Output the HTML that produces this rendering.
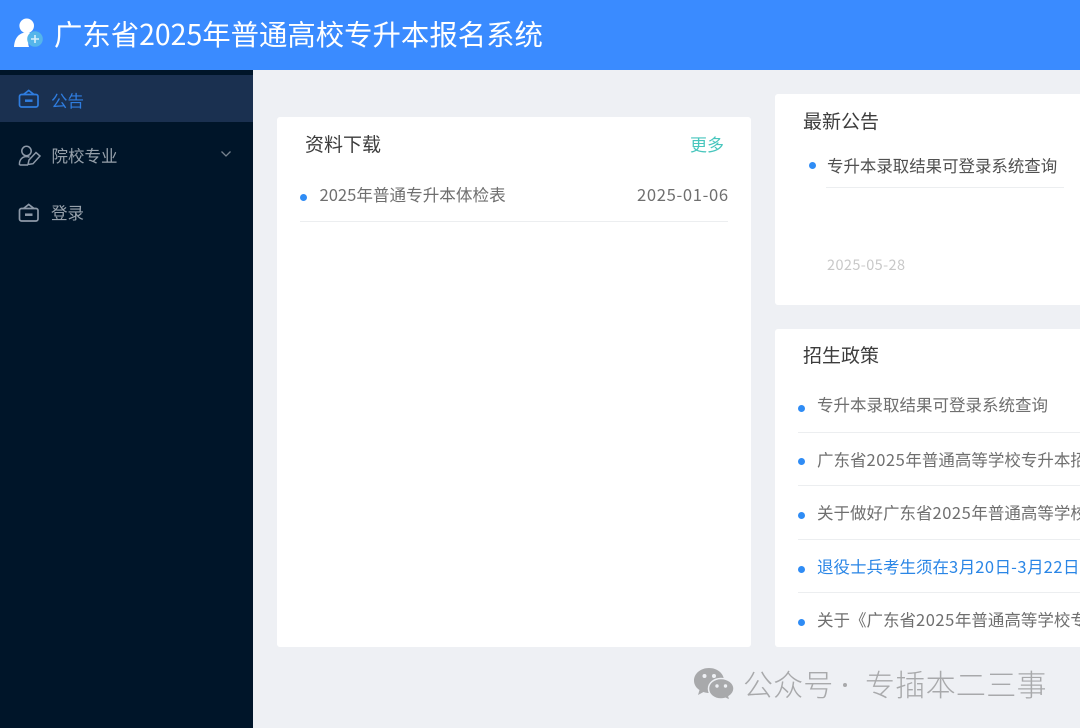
<!DOCTYPE html>
<html lang="zh"><head><meta charset="utf-8"><title>广东省2025年普通高校专升本报名系统</title>
<style>
html,body{margin:0;padding:0}
body{width:1080px;height:728px;position:relative;overflow:hidden;background:#eef0f4;font-family:"Noto Sans CJK SC","Liberation Sans",sans-serif}
#w{position:absolute;left:0;top:0;width:1080px;height:728px;overflow:hidden;filter:blur(.3px)}
.a{position:absolute;white-space:nowrap;line-height:1}
.box{position:absolute;background:#fff;border-radius:3px}
.line{position:absolute;height:1px;background:#eceef0}
.dot{position:absolute;width:7px;height:7px;border-radius:50%;background:#2f8cf5}
.h{font-size:19px;color:#3c3c3c}
.t{font-size:16.5px;color:#6f6f6f}
.n{letter-spacing:.55px}
svg{position:absolute}
</style></head><body><div id="w">
<div style="position:absolute;left:0;top:0;width:1080px;height:70px;background:#3a8bff"></div>
<svg style="left:12px;top:16px" width="34" height="34" viewBox="0 0 34 34">
<circle cx="14.700" cy="9.800" r="7.300" fill="#fff"/>
<path d="M2 31C2.500 23 6 17.500 13 16.500C17 16 20 17.500 21.500 19C17 21 15 26 17 31Z" fill="#fff"/>
<circle cx="23" cy="23" r="7.800" fill="#55b5ea"/>
<path d="M19 23H27M23 19V27" stroke="#d8f0fb" stroke-width="1.600" fill="none"/>
</svg>
<div class="a" style="left:54px;top:20px;font-size:28.4px;color:#fff">广东省2025年普通高校专升本报名系统</div>

<div style="position:absolute;left:0;top:70px;width:253px;height:658px;background:#001529"></div>
<div style="position:absolute;left:0;top:75px;width:253px;height:47px;background:#1a3050"></div>
<svg style="left:18px;top:89px" width="22" height="20" viewBox="0 0 22 20" fill="none" stroke="#2f7de0" stroke-width="1.700">
<rect x="1.500" y="5.500" width="18.500" height="12.500" rx="2"/><path d="M5.500 5.500L10.700 1.500L16 5.500"/><path d="M7 11.700H14.500" stroke-width="2.500"/>
</svg>
<div class="a" style="left:51px;top:91.500px;font-size:16.5px;color:#2f7de0">公告</div>
<svg style="left:18px;top:145px" width="23" height="21" viewBox="0 0 23 21" fill="none" stroke="#8d99a8" stroke-width="1.500">
<circle cx="8.500" cy="6" r="4.700"/><path d="M1.500 20C1 15 4 12 8 11.500C9.500 11.500 10.500 11.700 11.500 12.300"/><path d="M1.500 20H10"/><path d="M10 19.500L11 15L18 7.500L22 11L15 18.700Z"/>
</svg>
<div class="a" style="left:51.500px;top:147px;font-size:16.5px;color:#97a1ab">院校专业</div>
<svg style="left:220px;top:150px" width="12" height="9" viewBox="0 0 12 9" fill="none" stroke="#76828e" stroke-width="1.300"><path d="M1.500 1.500L6 6L10.500 1.500"/></svg>
<svg style="left:18px;top:203px" width="22" height="20" viewBox="0 0 22 20" fill="none" stroke="#8d99a8" stroke-width="1.700">
<rect x="1.500" y="5.500" width="18.500" height="12.500" rx="2"/><path d="M5.500 5.500L10.700 1.500L16 5.500"/><path d="M7 11.700H14.500" stroke-width="2.500"/>
</svg>
<div class="a" style="left:51px;top:204px;font-size:16.5px;color:#97a1ab">登录</div>

<div class="box" style="left:277px;top:117px;width:474px;height:530px"></div>
<div class="a h" style="left:305px;top:134px">资料下载</div>
<div class="a" style="left:690px;top:134.500px;font-size:17px;color:#48c6bd">更多</div>
<div class="dot" style="left:300px;top:194px"></div>
<div class="a" style="left:319.500px;top:185.500px;font-size:16.6px;color:#6f6f6f">2025年普通专升本体检表</div>
<div class="a" style="left:637px;top:185.500px;font-size:16.6px;color:#6f6f6f;letter-spacing:.65px">2025-01-06</div>
<div class="line" style="left:300px;top:220.500px;width:428px"></div>

<div class="box" style="left:775px;top:94px;width:320px;height:211px"></div>
<div class="a h" style="left:803px;top:110.500px">最新公告</div>
<div class="dot" style="left:809px;top:161.500px"></div>
<div class="a" style="left:827px;top:156.500px;font-size:16.45px;color:#505050">专升本录取结果可登录系统查询</div>
<div class="line" style="left:826px;top:187px;width:238px"></div>
<div class="a" style="left:827px;top:257.500px;font-size:14.500px;color:#c8c8c8;letter-spacing:.4px">2025-05-28</div>

<div class="box" style="left:775px;top:329px;width:320px;height:318px"></div>
<div class="a h" style="left:803px;top:345px">招生政策</div>
<div class="dot" style="left:798px;top:404.500px"></div>
<div class="a t" style="left:817px;top:396px">专升本录取结果可登录系统查询</div>
<div class="line" style="left:798px;top:432px;width:282px"></div>
<div class="dot" style="left:798px;top:458px"></div>
<div class="a t" style="left:817px;top:450.500px">广东省<span class="n">2025</span>年普通高等学校专升本招</div>
<div class="line" style="left:798px;top:485px;width:282px"></div>
<div class="dot" style="left:798px;top:511.500px"></div>
<div class="a t" style="left:817px;top:503.500px">关于做好广东省<span class="n">2025</span>年普通高等学校</div>
<div class="line" style="left:798px;top:539px;width:282px"></div>
<div class="dot" style="left:798px;top:565.500px"></div>
<div class="a t" style="left:817px;top:557.500px;color:#2a86e6">退役士兵考生须在<span class="n">3</span>月<span class="n">20</span>日<span class="n">-3</span>月<span class="n">22</span>日</div>
<div class="line" style="left:798px;top:592px;width:282px"></div>
<div class="dot" style="left:798px;top:618.500px"></div>
<div class="a t" style="left:817px;top:611px">关于《广东省<span class="n">2025</span>年普通高等学校专</div>

<svg style="left:693px;top:667px" width="42" height="34" viewBox="0 0 42 34">
<path d="M16 1C7.700 1 1 6.500 1 13.500C1 17.500 3 20.800 6.500 23L5 28L10.500 25C12.500 25.700 14.500 26 16 26C25 26 31 20 31 13.500C31 6.500 24.300 1 16 1Z" fill="#a8a9ab"/>
<path d="M28 11.500C21 11.500 15.500 16 15.500 21.700C15.500 27.500 21 32 28 32C29.500 32 31 31.700 32.500 31.300L37 33.500L36 29.500C39 27.500 41 24.700 41 21.700C41 16 35 11.500 28 11.500Z" fill="#a8a9ab" stroke="#eef0f4" stroke-width="1.500"/>
<circle cx="11.500" cy="9" r="2" fill="#eef0f4"/><circle cx="21" cy="9" r="2" fill="#eef0f4"/>
<circle cx="24" cy="19" r="1.700" fill="#eef0f4"/><circle cx="32.500" cy="19" r="1.700" fill="#eef0f4"/>
</svg>
<div class="a" style="left:743px;top:668px;font-size:30px;font-weight:300;color:#a8a9ab;letter-spacing:.1px">公众号</div>
<div style="position:absolute;left:843px;top:683px;width:4px;height:4px;border-radius:50%;background:#a8a9ab"></div>
<div class="a" style="left:865px;top:668px;font-size:30px;font-weight:300;color:#a8a9ab;letter-spacing:.3px">专插本二三事</div>
</div></body></html>
